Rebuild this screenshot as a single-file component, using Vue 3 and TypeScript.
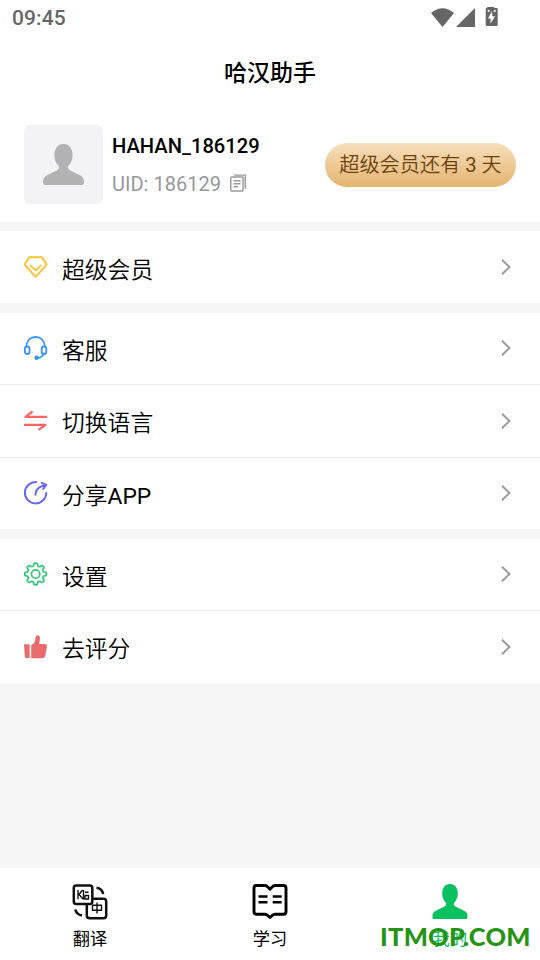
<script setup lang="ts">
type IconName = 'vip' | 'service' | 'swap' | 'share' | 'gear' | 'thumb'
interface Item { icon: IconName; label: string; latin?: string }

const groups: Item[][] = [
  [{ icon: 'vip', label: '超级会员' }],
  [
    { icon: 'service', label: '客服' },
    { icon: 'swap', label: '切换语言' },
    { icon: 'share', label: '分享', latin: 'APP' },
  ],
  [
    { icon: 'gear', label: '设置' },
    { icon: 'thumb', label: '去评分' },
  ],
]

// Outline of an eight-toothed gear with softly rounded teeth
const gearPath = Array.from({ length: 160 }, (_, i) => {
  const a = (i / 160) * Math.PI * 2
  const r = 9.5 + 1.35 * Math.tanh(2.2 * Math.cos(8 * a))
  return `${i ? 'L' : 'M'}${(12 + r * Math.sin(a)).toFixed(2)} ${(12 - r * Math.cos(a)).toFixed(2)}`
}).join('') + 'Z'

const personPath = 'M18 0C12.800 0 10 4.300 10 9.800c0 4.200 1.500 7.400 4 9.800.5 1.500-.1 2.600-1.600 3.400L4 27.200C1.200 28.700 0 30.300 0 32.800v1.100C0 35.200.8 36 2 36h32c1.200 0 2-.8 2-2.100v-1.100c0-2.500-1.200-4.100-4-5.600L23.600 23c-1.500-.8-2.100-1.900-1.600-3.400 2.500-2.400 4-5.600 4-9.800C26 4.300 23.200 0 18 0Z'
</script>

<template>
  <div class="screen">
    <header class="status">
      <span class="time">09:45</span>
      <svg class="signals" width="68" height="22" viewBox="0 0 68 22" fill="#666">
        <path d="M0 5Q11.500-4.500 23 5L11.500 19Z" />
        <path d="M25 19L44 0v19Z" />
        <path transform="translate(-.8 0)" fill-rule="evenodd" d="M57-1h7v1h2.300q1.200 0 1.200 1.200v15.600q0 1.200-1.200 1.200h-9.600q-1.200 0-1.200-1.200V1.200Q55.500 0 56.700 0H57ZM57.500 2v1.700h2V2ZM63.500 2v1.700h2V2ZM61.800 3.200l-4 7.300h2.600v5l4.400-7.200h-2.700Z" />
      </svg>
    </header>
    <h1 class="title">哈汉助手</h1>

    <section class="profile">
      <div class="avatar">
        <svg width="41" height="41" viewBox="0 0 36 36"><path :d="personPath" fill="#b2b2b2" /></svg>
      </div>
      <div class="identity">
        <div class="name">HAHAN_186129</div>
        <div class="uid">
          <span>UID: 186129</span>
          <svg width="17" height="18" viewBox="0 0 17 18" fill="none" stroke="#999" stroke-width="1.400">
            <path d="M4 1.100h11.300v13.300" />
            <rect x=".8" y="3" width="12.300" height="14" rx=".8" />
            <path d="M3.500 6.800h7M3.500 9.700h7M3.500 12.700h4.500" />
          </svg>
        </div>
      </div>
      <div class="badge">超级会员还有 <span class="latin">3</span> 天</div>
    </section>

    <main class="menu">
      <section v-for="(group, g) in groups" :key="g" class="group">
        <div v-for="item in group" :key="item.label" class="row">
          <svg class="icon" width="24" height="24" viewBox="0 0 24 24" fill="none" stroke-linecap="round" stroke-linejoin="round">
            <g v-if="item.icon === 'vip'" stroke="#fcc22d" stroke-width="1.900">
              <path d="M6 2.300h11.300q.7 0 1.200.6l3.700 5.800q.5.700-.1 1.400l-9.500 10.700q-1 1-2 0L1.100 10.100q-.6-.7-.1-1.400l3.700-5.800q.5-.6 1.300-.6Z" />
              <path d="M6.500 10.600l5.100 4.800 5.200-4.800" />
            </g>
            <g v-else-if="item.icon === 'service'" stroke="#3295f3" stroke-width="1.800">
              <path d="M2.300 10.500C2.600 4.600 6.300 1 11.600 1S20.500 4.600 20.900 10.500M20 17.500c-1.100 2.500-3.200 4.200-6.200 4.600" />
              <rect x=".9" y="10.500" width="4.600" height="7.500" rx="2.300" />
              <rect x="17.700" y="10.500" width="4.600" height="7.500" rx="2.300" />
              <circle cx="12.600" cy="21.700" r="1.300" fill="#3295f3" />
            </g>
            <g v-else-if="item.icon === 'swap'" stroke="#ff6263" stroke-width="2.200" stroke-linecap="butt">
              <path d="M8.500 2.500L1.500 7.800H23M0 15.800h21.500l-7 5" />
            </g>
            <g v-else-if="item.icon === 'share'" stroke="#6668ef" stroke-width="2">
              <path d="M12.200 1A10.700 10.700 0 1 0 22.300 12" />
              <path d="M11.500 13.700c0-4.900 3.200-8.200 9.300-9.300M17.700 1.800l4.500 2.200-3 4" />
            </g>
            <g v-else-if="item.icon === 'gear'" stroke="#2cc875" stroke-width="1.700" transform="translate(-.4 0)">
              <path :d="gearPath" /><circle cx="12" cy="12" r="4.200" />
            </g>
            <g v-else fill="#e96c6c">
              <path d="M1 9.200h3.700q1 0 1 1v12.900H2q-1 0-1.100-1L0 10.200q0-1 1-1Z" />
              <path d="M7.200 10.100c3.400-1.900 3.900-3.600 4.200-7.100.2-1.900 1-2.800 2.100-2.800 2.100 0 2.700 2 2.400 4.200L15.300 9H21q2.200 0 2 2.200l-1.700 9.500q-.5 2.500-3.100 2.500H7.200Z" />
            </g>
          </svg>
          <span class="label">{{ item.label }}<span v-if="item.latin" class="latin">{{ item.latin }}</span></span>
          <svg class="chevron" width="12" height="18" viewBox="0 0 12 18" fill="none" stroke="#999" stroke-width="1.900"><path d="M2 1.700L9.500 9 2 16.300" /></svg>
        </div>
      </section>
    </main>

    <nav class="tabs">
      <div class="tab">
        <svg width="36" height="36" viewBox="0 0 36 36" fill="none" stroke="#111" stroke-width="2.500">
          <rect x="1.800" y="1.500" width="18.500" height="18.500" rx="2.500" />
          <path d="M20 14.800h11.500q2.700 0 2.700 2.700v14q0 2.700-2.700 2.700h-14q-2.700 0-2.700-2.700V20M24.500 3.700Q30 4.300 31.200 10M3.300 25.500Q4.300 30.500 10 31.500" />
          <path stroke-width="1.400" d="M6 6v9M10.500 6L7 10.500l4 4.500M11.500 6v9.500M13 8.300h3.500M12.500 11.500h4v3.500h-3.500v-3M20.500 21.200h9v5h-9ZM25 18.500v11" />
        </svg>
        <span>翻译</span>
      </div>
      <div class="tab">
        <svg width="36" height="36" viewBox="0 0 36 36" fill="none" stroke="#000" stroke-width="2.900" stroke-linejoin="round">
          <path d="M4.500 1.500h8.200q2 0 3.200 1.600L18 5.300l2.100-2.200q1.200-1.600 3.200-1.600h8.200q2.500 0 2.500 2.500v23.700q0 2.500-2.500 2.500h-8.300q-1.400 0-2.500 1L18 33.500l-2.700-2.300q-1.100-1-2.500-1H4.500Q2 30.200 2 27.700V4Q2 1.500 4.500 1.500Z" />
          <path d="M6.500 12.500h9M6.500 18.300h9M20.700 12.500h9M20.700 18.300h9" stroke-width="2.500" />
        </svg>
        <span>学习</span>
      </div>
      <div class="tab active">
        <svg width="36" height="36" viewBox="-.5 0 37 37"><path :d="personPath" fill="#0ac160" /></svg>
        <span>我的</span>
      </div>
      <div class="watermark">ITMOP.COM</div>
    </nav>
  </div>
</template>

<style>
body { margin: 0; }
</style>

<style scoped>
.screen { width: 540px; height: 960px; overflow: hidden; display: flex; flex-direction: column; background: #f5f5f5; color: #000; font-family: Roboto, "Noto Sans CJK SC", sans-serif; }
svg { display: block; flex: none; overflow: visible; }
.latin { font-weight: 400; }
.status { height: 36px; box-sizing: border-box; padding: 8px 42px 0 12px; display: flex; justify-content: space-between; align-items: flex-start; background: #fff; }
.time { color: #666; font-size: 21px; line-height: 20px; font-weight: 500; letter-spacing: .1px; }
.signals { margin-right: -1px; }
.title { margin: 0; height: 72px; box-sizing: border-box; padding-top: 1px; line-height: 73px; font-size: 23px; font-weight: 500; text-align: center; background: #fff; }
.profile { height: 114px; box-sizing: border-box; padding: 17px 24px 0; display: flex; background: #fff; }
.avatar { width: 79px; height: 79px; border-radius: 6px; background: #f3f3f5; display: flex; align-items: center; justify-content: center; }
.identity { margin-left: 9px; padding-top: 8px; }
.name { height: 26px; line-height: 26px; font-size: 20.150px; font-weight: 500; }
.uid { display: flex; align-items: center; gap: 9px; height: 26px; margin-top: 12px; font-size: 20.050px; color: #96979c; }
.uid svg { margin-top: -2px; }
.badge { margin: 18px 0 0 auto; width: 191px; height: 44px; line-height: 45px; border-radius: 22px; font-size: 20.200px; font-weight: 350; color: #6b420f; text-align: center; white-space: nowrap; background: linear-gradient(#f6dfbc, #e5b36f); }
.menu { flex: 1; padding-top: 9px; }
.group { background: #fff; margin-bottom: 10px; }
.row { height: 72px; box-sizing: border-box; padding: 0 28px 0 24px; display: flex; align-items: center; }
.row + .row { border-top: 1px solid #ececec; }
.row:first-child:not(:only-child) { height: 71px; padding-bottom: 1px; }
.row:nth-child(2) { height: 73px; }
.row:nth-child(3) { padding-bottom: 1px; }
.label { margin-left: 14px; font-size: 22.800px; font-weight: 350; line-height: 34px; padding-top: 7px; }
.row:first-child:not(:only-child) .label, .row:nth-child(3) .label { padding-top: 8px; }
.row:nth-child(2) .label { padding-top: 5px; }
.chevron { margin-left: auto; }
.tabs { position: relative; height: 92px; display: grid; grid-template-columns: repeat(3, 1fr); background: #fff; }
.tab { display: flex; flex-direction: column; align-items: center; padding-top: 16px; font-size: 17.200px; line-height: 24px; font-weight: 400; }
.tab span { margin-top: 7px; }
.active { color: #0ac160; }
.watermark { position: absolute; left: 380px; top: 52px; color: #259414; font: 900 25.400px/32px Lato, sans-serif; letter-spacing: .3px; white-space: nowrap; }
</style>
